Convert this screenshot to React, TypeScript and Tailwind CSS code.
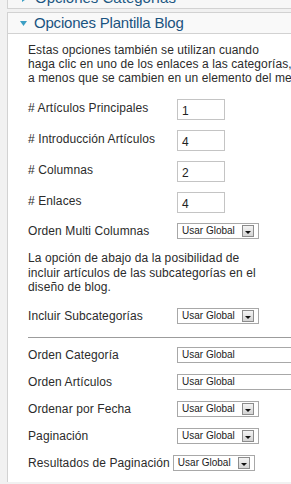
const font = { fontFamily: '"Liberation Sans", Arial, sans-serif' };

function Arrow({ open }: { open: boolean }) {
  return open ? (
    <svg width="7" height="5" viewBox="0 0 7 5" className="shrink-0">
      <path d="M0 0H7L3.5 5Z" fill="#3c9fc4" />
    </svg>
  ) : (
    <svg width="5" height="7" viewBox="0 0 5 7" className="shrink-0">
      <path d="M0 0L5 3.5L0 7Z" fill="#3c9fc4" />
    </svg>
  );
}

function SmallSelect() {
  return (
    <div className="flex h-[16px] w-[82px] shrink-0 items-center border border-[#a8a8a8] bg-white">
      <span className="pl-[4px] text-[10px] leading-none text-[#222]">Usar Global</span>
      <span className="ml-auto mr-[4px] flex h-[12px] w-[12px] items-end justify-center border border-[#8c8c8c] bg-gradient-to-b from-[#f4f4f4] to-[#d4d4d4] pb-[2px]">
        <svg width="6" height="3" viewBox="0 0 6 3">
          <path d="M0 0H6L3 3Z" fill="#111" />
        </svg>
      </span>
    </div>
  );
}

function WideSelect() {
  return (
    <div className="flex h-[16px] w-[170px] shrink-0 items-center border border-[#a8a8a8] bg-white">
      <span className="pl-[4px] text-[10px] leading-none text-[#222]">Usar Global</span>
    </div>
  );
}

function InputRow({ label, value }: { label: string; value: string }) {
  return (
    <div className="flex h-[31px] items-start">
      <span className="w-[149px] shrink-0 pt-px text-[12px] leading-[16px] tracking-[0.1px] text-[#2b2b2b]">
        {label}
      </span>
      <div className="flex h-[21px] w-[48px] items-center border border-[#c4c4c4] bg-white pl-[4px] pt-[2px] text-[12px] text-[#222]">
        {value}
      </div>
    </div>
  );
}

function SelectRow({ label, wide, h }: { label: string; wide?: boolean; h: string }) {
  return (
    <div className={`flex items-start ${h}`}>
      <span className="w-[149px] shrink-0 text-[12px] leading-[16px] tracking-[0.1px] text-[#2b2b2b]">
        {label}
      </span>
      {wide ? <WideSelect /> : <SmallSelect />}
    </div>
  );
}

export default function App() {
  return (
    <div className="h-[484px] w-[291px] overflow-hidden bg-[#f1f1f1] pl-[7px]" style={font}>
      <div className="w-[420px]">
        {/* Collapsed panel above */}
        <div className="-mt-[13px] flex h-[22px] items-center gap-[8px] border-y border-l border-[#d2d2d2] bg-[#f7f7f7] pl-[14px]">
          <Arrow open={false} />
          <span className="pt-[1px] text-[15px] text-[#1d5883]">Opciones Categorías</span>
        </div>

        {/* Open panel */}
        <div className="mt-[3px] border-l border-t border-[#d2d2d2] bg-white">
          <div className="flex h-[21px] items-center gap-[7px] border-b border-[#d2d2d2] bg-[#f9f9f9] pl-[12px]">
            <Arrow open />
            <span className="pt-[1px] text-[15px] tracking-[-0.2px] text-[#1a5380]">
              Opciones Plantilla Blog
            </span>
          </div>

          <div className="flex flex-col pl-[20px] pt-[9px]">
            <p className="whitespace-nowrap text-[12px] leading-[14px] tracking-[0.1px] text-[#2b2b2b]">
              Estas opciones también se utilizan cuando
              <br />
              haga clic en uno de los enlaces a las categorías,
              <br />
              a menos que se cambien en un elemento del menú.
            </p>

            <div className="mt-[14px] flex flex-col">
              <InputRow label="# Artículos Principales" value="1" />
              <InputRow label="# Introducción Artículos" value="4" />
              <InputRow label="# Columnas" value="2" />
              <InputRow label="# Enlaces" value="4" />
              <SelectRow label="Orden Multi Columnas" h="h-[28px]" />
            </div>

            <p className="whitespace-nowrap text-[12px] leading-[14.5px] tracking-[0.1px] text-[#2b2b2b]">
              La opción de abajo da la posibilidad de
              <br />
              incluir artículos de las subcategorías en el
              <br />
              diseño de blog.
            </p>

            <div className="mt-[13px]">
              <SelectRow label="Incluir Subcategorías" h="h-[16px]" />
            </div>

            <div className="mt-[13px] border-t border-[#9c9c9c]" />

            <div className="mt-[9px] flex flex-col">
              <SelectRow label="Orden Categoría" wide h="h-[27px]" />
              <SelectRow label="Orden Artículos" wide h="h-[27px]" />
              <SelectRow label="Ordenar por Fecha" h="h-[27px]" />
              <SelectRow label="Paginación" h="h-[27px]" />
              <div className="flex h-[27px] items-start">
                <span className="mr-[3px] shrink-0 text-[12px] leading-[16px] tracking-[0.1px] text-[#2b2b2b]">
                  Resultados de Paginación
                </span>
                <SmallSelect />
              </div>
            </div>
          </div>
        </div>
      </div>
    </div>
  );
}
